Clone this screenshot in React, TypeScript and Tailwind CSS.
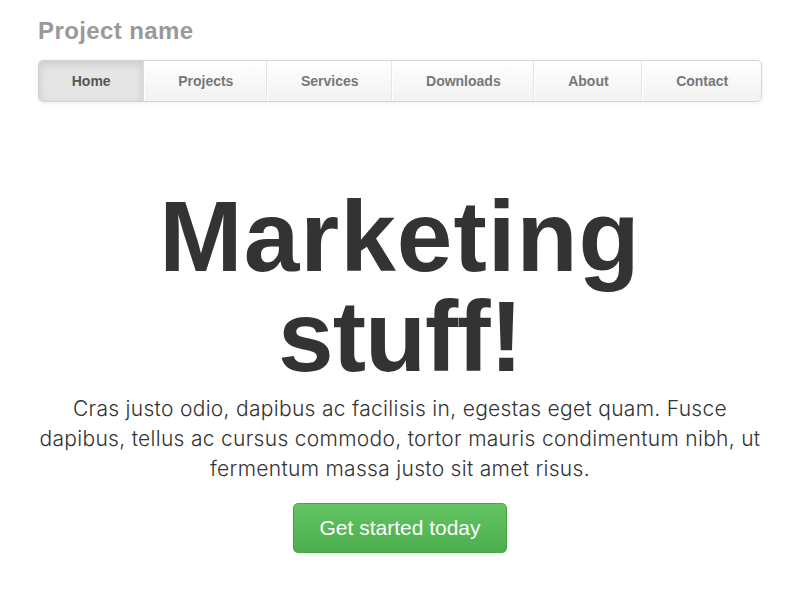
const navItems = ["Home", "Projects", "Services", "Downloads", "About", "Contact"];

const App = () => {
  return (
    <div className="min-h-screen bg-white font-['Liberation_Sans',Arial,sans-serif] text-[#333]">
      <div className="mx-[38px] pt-[18px]">
        {/* Masthead */}
        <h3 className="text-[24px] leading-[26px] font-bold tracking-[0.4px] text-[#999]">Project name</h3>
        <nav className="mt-[16px] flex h-[42px] rounded-[5px] border border-[#d4d4d4] bg-gradient-to-b from-white to-[#f2f2f2] shadow-[0_1px_4px_rgba(0,0,0,0.07)] overflow-hidden">
          {navItems.map((item, i) => (
            <a
              key={item}
              href="#"
              className={
                i === 0
                  ? "flex flex-auto items-center justify-center bg-[#e5e5e5] text-[14px] font-bold text-[#555] border-r border-[#ddd] shadow-[inset_0_3px_8px_rgba(0,0,0,0.125)]"
                  : i === navItems.length - 1
                  ? "flex flex-auto items-center justify-center text-[14px] font-bold text-[#777] border-l border-white"
                  : "flex flex-auto items-center justify-center text-[14px] font-bold text-[#777] border-l border-white border-r border-r-[#e5e5e5]"
              }
            >
              {item}
            </a>
          ))}
        </nav>

        {/* Jumbotron */}
        <div className="mt-[84px] flex flex-col items-center text-center">
          <h1 className="text-[100px] leading-[100px] font-bold text-[#333]">
            <span className="block tracking-[1px]">Marketing</span>
            <span className="block tracking-[-1px]">stuff!</span>
          </h1>
          <p className="mt-[8px] font-['Inter',sans-serif] text-[21px] leading-[30px] font-light tracking-[0.3px] text-[#333]">
            Cras justo odio, dapibus ac facilisis in, egestas eget quam. Fusce
            <br />
            dapibus, tellus ac cursus commodo, tortor mauris condimentum nibh, ut
            <br />
            fermentum massa justo sit amet risus.
          </p>
          <a
            href="#"
            className="mt-[19px] flex h-[50px] w-[214px] items-center justify-center rounded-[5px] border border-[#47a447] bg-gradient-to-b from-[#62c462] to-[#4cae4c] text-[21px] text-white"
          >
            Get started today
          </a>
        </div>
      </div>
    </div>
  );
};

export default App;
